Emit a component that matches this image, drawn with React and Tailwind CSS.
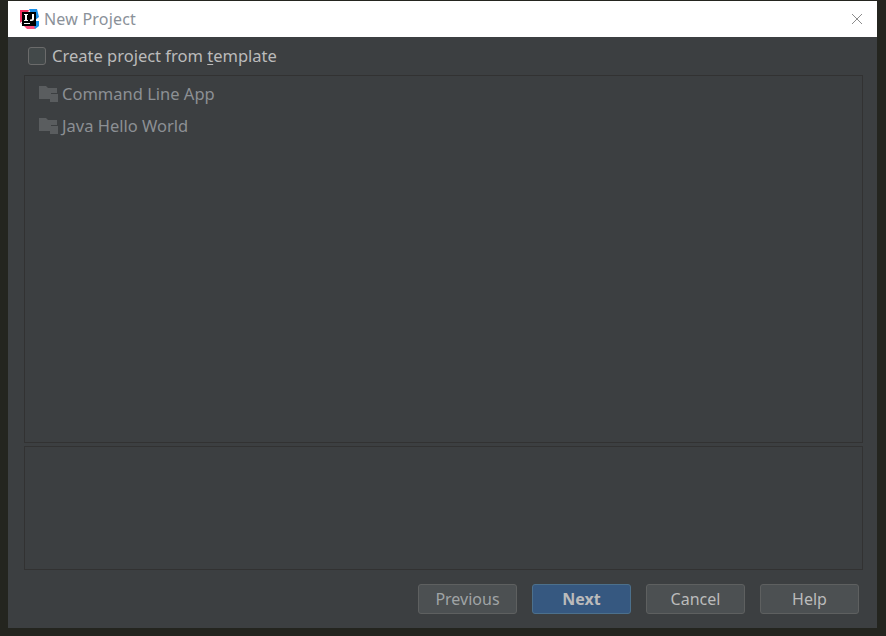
import React from 'react';

const FolderIcon = () => (
  <svg width="20" height="18" viewBox="0 0 20 18" className="shrink-0">
    <path d="M0 1h7l2 2h9v5h-6v6H0z" fill="#5a5d5f" />
    <rect x="11" y="9" width="8" height="8" fill="#5a5d5f" />
  </svg>
);

const AppLogo = () => (
  <svg width="20" height="20" viewBox="0 0 20 20" className="shrink-0">
    <path d="M1 1h9L6 10l-5 4z" fill="#f0325f" />
    <path d="M10 0h8l2 8-5 4z" fill="#1a8fe8" />
    <path d="M2 14l6 6h8l4-8z" fill="#fc4f7e" />
    <path d="M14 12h6v5l-4 3z" fill="#1a8fe8" />
    <rect x="3" y="3" width="14" height="14" fill="#000000" />
    <rect x="5" y="14" width="6" height="1" fill="#ffffff" />
    <rect x="5" y="5" width="4" height="1" fill="#ffffff" />
    <rect x="6" y="5" width="2" height="7" fill="#ffffff" />
    <rect x="5" y="11" width="4" height="1" fill="#ffffff" />
    <path d="M13 5h2v5c0 2-2 2-4 2v-1.500c1 0 2 0 2-1z" fill="#ffffff" />
  </svg>
);

const templates = ['Command Line App', 'Java Hello World'];

const buttons = [
  { label: 'Previous', className: 'bg-[#4c5052] border-[#5e6060] text-[#a0a4a6]' },
  { label: 'Next', className: 'bg-[#365880] border-[#4c708c] text-[#bbbbbb] font-bold' },
  { label: 'Cancel', className: 'bg-[#4c5052] border-[#5e6060] text-[#bbbbbb]' },
  { label: 'Help', className: 'bg-[#4c5052] border-[#5e6060] text-[#bbbbbb]' },
];

export default function App() {
  return (
    <div className="w-[886px] h-[636px] bg-[#24251f] pt-px pl-2 overflow-hidden font-['Noto_Sans',sans-serif]">
      <div className="w-[869px] h-[627px] bg-[#3c3f41] flex flex-col">
        {/* title bar */}
        <div className="h-9 bg-white flex items-center pl-[11px] pr-[14px] shrink-0">
          <AppLogo />
          <span className="ml-[5px] text-[16px] text-[#8a9199] tracking-[0.2px]">New Project</span>
          <svg width="12" height="12" viewBox="0 0 12 12" className="ml-auto" stroke="#8c8c8c" strokeWidth="1">
            <path d="M1 1l10 10M11 1L1 11" />
          </svg>
        </div>

        {/* checkbox row */}
        <div className="flex items-center h-[38px] pl-5 shrink-0">
          <div className="w-[18px] h-[18px] rounded-[3px] border border-[#6b6b6b] bg-[#43494a]" />
          <span className="ml-[6px] text-[16.500px] text-[#bbbbbb]">
            Create project from <span className="underline underline-offset-2">t</span>emplate
          </span>
        </div>

        {/* template list */}
        <div className="mx-4 h-[368px] border border-[#323232] shrink-0 pl-[14px] pt-[2px] w-[839px]">
          {templates.map((name) => (
            <div key={name} className="flex items-center h-8 gap-[3px]">
              <FolderIcon />
              <span className="text-[16.500px] text-[#8c9094]">{name}</span>
            </div>
          ))}
        </div>

        {/* description */}
        <div className="mx-4 mt-[3px] h-[124px] w-[839px] border border-[#323232] shrink-0" />

        {/* footer */}
        <div className="flex justify-end gap-[15px] pt-[14px] pr-[18px]">
          {buttons.map((b) => (
            <button
              key={b.label}
              className={`w-[99px] h-[30px] rounded-[3px] border text-[16px] flex items-center justify-center ${b.className}`}
            >
              {b.label}
            </button>
          ))}
        </div>
      </div>
    </div>
  );
}
